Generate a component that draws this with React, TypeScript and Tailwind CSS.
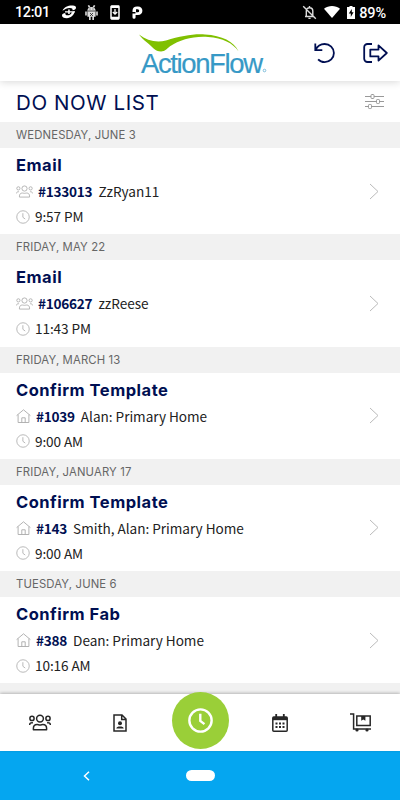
import type { ReactNode } from 'react';

const items = [
  { date: 'WEDNESDAY, JUNE 3', title: 'Email', type: 'lead', id: '#133013', name: 'ZzRyan11', time: '9:57 PM' },
  { date: 'FRIDAY, MAY 22', title: 'Email', type: 'lead', id: '#106627', name: 'zzReese', time: '11:43 PM' },
  { date: 'FRIDAY, MARCH 13', title: 'Confirm Template', type: 'job', id: '#1039', name: 'Alan: Primary Home', time: '9:00 AM' },
  { date: 'FRIDAY, JANUARY 17', title: 'Confirm Template', type: 'job', id: '#143', name: 'Smith, Alan: Primary Home', time: '9:00 AM' },
  { date: 'TUESDAY, JUNE 6', title: 'Confirm Fab', type: 'job', id: '#388', name: 'Dean: Primary Home', time: '10:16 AM' },
];

function PeopleIcon({ className, stroke }: { className: string; stroke: number }) {
  return (
    <svg className={className} viewBox="0 0 22 17" fill="none" stroke="currentColor" strokeWidth={stroke}>
      <circle cx="11" cy="4.6" r="3.4" />
      <circle cx="3" cy="4.4" r="2.1" />
      <circle cx="19" cy="4.4" r="2.1" />
      <path d="M4.4 15.8v-1.5c0-2.3 1.5-3.8 3.7-3.8.9 0 1.7.4 2.9.4s2-.4 2.9-.4c2.2 0 3.7 1.5 3.7 3.8v1.5H4.4z" strokeLinejoin="round" />
      <path d="M.6 11c0-1.5.9-2.2 2.3-2.2h1M21.4 11c0-1.5-.9-2.2-2.3-2.2h-1" />
    </svg>
  );
}

function ClockIcon({ className, stroke }: { className: string; stroke: number }) {
  return (
    <svg className={className} viewBox="0 0 24 24" fill="none" stroke="currentColor" strokeWidth={stroke}>
      <circle cx="12" cy="12" r="10.7" />
      <path d="M11.8 5.5v7l4 3" />
    </svg>
  );
}

function HomeIcon() {
  return (
    <svg className="h-[14px] w-[15px]" viewBox="0 0 15 14" fill="none" stroke="currentColor" strokeWidth="0.9">
      <path d="M.6 6.6 7.5.8l6.9 5.8M2.1 5.6v7.9h10.8V5.6M5.8 13.5V8.8h3.4v4.7" />
    </svg>
  );
}

function StatusBar() {
  return (
    <div className="flex h-6 shrink-0 items-center bg-black pl-[15px] pr-[14px] text-white">
      <span className="w-[46px] whitespace-nowrap pt-[2px] font-['Roboto',sans-serif] text-[14.5px] font-medium leading-6 tracking-[-0.4px]">12:01</span>
      <svg className="h-4 w-4" viewBox="0 0 16 16" fill="white">
        <path d="M1.5 6.8C3 2.8 8.500 1 12 1.600c2 .2 3 1 3 2.100 0 1.400-1.500 2.500-3.500 2.500.5-1.600-1-2.400-3-2.200-2.500.2-4.500 1.200-7 2.800z" />
        <path d="M13.800 7c-.5 4-4 7-8 7.200-3 0-5-1.100-4.800-3C1.200 9.800 2.600 9 4.300 8.900c-.2 1.500.6 2.400 2.200 2.400 2.300 0 3.700-1.300 4.200-2.900z" />
        <path d="M4 7.200h3.200V5.500h1.500v1.700h5v1.300h-5v1.600H7.200V8.500H4z" />
      </svg>
      <svg className="ml-2 h-[15px] w-[13px]" viewBox="0 0 13 15" fill="#ddd">
        <path d="M2.4 5.8C2.4 3.7 4 2 6.5 2s4.1 1.7 4.1 3.8v6H9V15H7.3v-3.2H5.7V15H4v-3.2H2.4z" />
        <path d="m3.4.3 1.2 2M9.6.3l-1.2 2M1 6.5v4M12 6.5v4" stroke="#ddd" strokeWidth="1.6" />
        <path d="M4.5 4h1M7.5 4h1M2.4 6h8.2M5 8l3 3M8 8l-3 3" stroke="#222" strokeWidth=".8" />
      </svg>
      <svg className="ml-[12px] h-[15px] w-[10px]" viewBox="0 0 10 15" fill="none" stroke="white">
        <rect x="1" y="1" width="8" height="13" rx=".7" strokeWidth="1.5" />
        <path d="M1 1.8h8M1 13h8" strokeWidth="2.3" />
        <path d="M5 4v5M2.8 7 5 9.2 7.2 7" strokeWidth="1.3" />
      </svg>
      <svg className="ml-[12px] h-[13px] w-[11px]" viewBox="0 0 11 13" fill="white" fillRule="evenodd">
        <path d="M.5 6V4.800C.5 2 2.200.5 5 .5h1c2.700 0 4.400 1.700 4.400 4.200S8.700 9 6 9H3.600v2.200a1.500 1.500 0 0 1-3.100 0V7.500h3V6zM4 3.300v3h1.700a1.500 1.500 0 0 0 0-3z" />
      </svg>
      <svg className="ml-auto h-[15px] w-[15px]" viewBox="0 0 15 15" fill="none" stroke="#ddd" strokeWidth="1.4">
        <path d="M3 11.5h9M4.3 11V6c0-2 1.3-3.2 3.2-3.2s3.3 1.2 3.3 3.2v5M7.5 1v2M6.4 13.4h2.2M1.2 1.2l12.6 12.6" />
      </svg>
      <svg className="ml-[7px] h-3 w-4" viewBox="0 0 16 12" fill="white">
        <path d="M0 2.8C4.5-.9 11.5-.9 16 2.8L8 12z" />
      </svg>
      <svg className="ml-[7px] h-[13px] w-2" viewBox="0 0 8 13">
        <path d="M2.5 0h3v1H8v12H0V1h2.5z" fill="white" />
        <path d="M4.8 3 1.8 7.5h2V11l2.8-4.8H4.8z" fill="black" />
      </svg>
      <span className="ml-[4px] pt-[3px] font-['Roboto',sans-serif] text-[14.5px] font-medium leading-6 tracking-[-0.1px]">89%</span>
    </div>
  );
}

function Header() {
  return (
    <header className="z-10 flex h-[57px] shrink-0 items-center bg-white pl-[139px] pr-[12px] text-[#000f52] shadow-[0_1px_8px_rgba(0,0,0,0.16)]">
      <svg className="h-[42px] w-[130px] overflow-visible" viewBox="0 0 130 42">
        <path d="M0 2.5C8 8.5 17 11 27 8.5 42 4 54 1.6 66 2.4c17 1 29 7 33.500 16.800-6-8.500-15.500-13.200-30.500-14.300-15-1-28 2.800-38 9.300-3 2.500-5 5.200-9 5.200-6 0-9-5-14-9C4.500 7.800 2 5 0 2.5z" fill="#80c000" />
        <text x="2" y="40.500" textLength="122" lengthAdjust="spacing" fontSize="27.500" fill="#3799c6" stroke="#3799c6" strokeWidth=".2" fontFamily="Liberation Sans, sans-serif">ActionFlow</text>
        <circle cx="125.500" cy="38.500" r="1.300" fill="none" stroke="#3799c6" strokeWidth=".6" />
      </svg>
      <svg className="ml-auto h-[22px] w-[22px]" viewBox="0 0 22 22" fill="none" stroke="currentColor" strokeWidth="1.8">
        <path d="M1.3 1.4v6.8h7M1.6 8C3.3 4.2 6.5 2 10.6 2c5.2 0 9.3 4 9.3 9s-4 9.2-9.2 9.2c-2.7 0-5-1-6.6-2.8" />
      </svg>
      <svg className="ml-[27px] h-5 w-[25px]" viewBox="0 0 25 20" fill="none" stroke="currentColor" strokeWidth="1.8" strokeLinejoin="round">
        <path d="M9 1H4.5A3.3 3.3 0 0 0 1.2 4.3v11.4A3.3 3.3 0 0 0 4.5 19H9" />
        <path d="M7.3 6.6h8.2V2.3L23.8 10l-8.3 7.6v-4.2H7.3z" />
      </svg>
    </header>
  );
}

function ListItem({ item }: { item: (typeof items)[number] }) {
  return (
    <section className="h-[112.3px] shrink-0 bg-white">
      <h2 className="h-[26px] bg-[#f1f1f1] pl-4 font-['Inter',sans-serif] text-[11.3px] leading-[26.5px] tracking-[0.15px] text-[#666]">{item.date}</h2>
      <div className="flex h-[86px] items-center justify-between pl-4 pr-[21px] text-[#222]">
        <div className="h-full">
          <h3 className="pt-[5px] font-['Inter',sans-serif] text-[16.5px] font-bold leading-6 tracking-[0.5px] text-[#000f52]">{item.title}</h3>
          <div className="mt-px flex h-[26px] items-center font-['Noto_Sans_CJK_SC',sans-serif] text-[13.6px] leading-[26px]">
            <span className="text-[#aaa]">
              {item.type === 'lead' ? <PeopleIcon className="h-[13px] w-[17px]" stroke={1.1} /> : <HomeIcon />}
            </span>
            <b className="ml-[5px] font-bold tracking-[-0.25px] text-[#000f52]">{item.id}</b>
            <span className="ml-[6px] tracking-[-0.03px]">{item.name}</span>
          </div>
          <div className="flex h-[25px] items-center font-['Noto_Sans_CJK_SC',sans-serif] text-[13.6px] leading-[25px]">
            <ClockIcon className="h-[14px] w-[14px] text-[#aaa]" stroke={1.4} />
            <span className="ml-[5px] tracking-[-0.1px]">{item.time}</span>
          </div>
        </div>
        <svg className="h-[17px] w-[10px]" viewBox="0 0 10 17" fill="none" stroke="#bbb" strokeWidth="1">
          <path d="m1 1 8 7.5L1 16" />
        </svg>
      </div>
    </section>
  );
}

function Tab({ children }: { children: ReactNode }) {
  return <div className="flex w-20 items-center justify-center">{children}</div>;
}

function TabBar() {
  return (
    <nav className="z-10 flex h-[57px] shrink-0 bg-white text-[#272727] shadow-[0_-1px_3px_rgba(0,0,0,0.25)]">
      <Tab><PeopleIcon className="h-[17px] w-[22px]" stroke={1.5} /></Tab>
      <Tab>
        <svg className="h-[18px] w-[14px]" viewBox="0 0 14 18" fill="none" stroke="currentColor" strokeWidth="1.5">
          <path d="M1 1h8l4 4v12H1zM8.7 1v4.4H13" />
          <circle cx="7" cy="9.3" r="2" fill="currentColor" stroke="none" />
          <path d="M3.3 14.5c.3-1.7 1.4-2.1 3.7-2.1s3.4.4 3.7 2.1z" fill="currentColor" stroke="none" />
        </svg>
      </Tab>
      <Tab>
        <div className="-mt-[5px] flex h-[57px] w-[57px] shrink-0 items-center justify-center rounded-full bg-[#9acf38] text-white">
          <ClockIcon className="h-[25px] w-[25px]" stroke={2.3} />
        </div>
      </Tab>
      <Tab>
        <svg className="h-[18px] w-4" viewBox="0 0 16 18" fill="none" stroke="currentColor" strokeWidth="1.5">
          <rect x=".8" y="3" width="14.4" height="14.2" rx="1" />
          <path d="M1 4.6h14" strokeWidth="3.2" />
          <path d="M4.2 0v3M11.8 0v3" strokeWidth="1.8" />
          <path d="M3.5 9.5h9M3.5 13h9" strokeWidth="2" strokeDasharray="2 1.5" />
        </svg>
      </Tab>
      <Tab>
        <svg className="h-[19px] w-[21px]" viewBox="0 0 21 19" fill="none" stroke="currentColor" strokeWidth="1.5">
          <path d="M0 1h3.6v15H21M6.8 3h13.4v9.5H6.8z" />
          <path d="M11.2 3h4.2v4.8l-2.1-1.4-2.1 1.4z" fill="currentColor" stroke="none" />
          <circle cx="7" cy="17" r="1.6" fill="currentColor" stroke="none" />
          <circle cx="17" cy="17" r="1.6" fill="currentColor" stroke="none" />
        </svg>
      </Tab>
    </nav>
  );
}

export default function App() {
  return (
    <div className="flex h-[800px] w-[400px] flex-col overflow-hidden bg-white">
      <StatusBar />
      <Header />
      <main className="flex min-h-0 flex-1 flex-col overflow-hidden">
        <div className="flex h-[41px] shrink-0 items-center justify-between pl-4 pr-4">
          <h1 className="pt-[2px] font-['Inter',sans-serif] text-[20.5px] leading-[41px] tracking-[0.6px] text-[#000f52]">DO NOW LIST</h1>
          <svg className="h-4 w-[19px]" viewBox="0 0 19 16" fill="white" stroke="#999" strokeWidth="1">
            <path d="M0 2.5h19M0 7.5h19M0 12.5h19" />
            <rect x="6" y=".5" width="3" height="4" rx=".8" />
            <rect x="11.5" y="5.5" width="3" height="4" rx=".8" />
            <rect x="3.5" y="10.5" width="3" height="4" rx=".8" />
          </svg>
        </div>
        {items.map((item) => (
          <ListItem key={item.date} item={item} />
        ))}
        <div className="h-[26px] shrink-0 bg-[#f1f1f1]" />
      </main>
      <TabBar />
      <div className="flex h-[49px] shrink-0 items-center bg-[#05a6f0] pl-[83px]">
        <svg className="h-[10px] w-[7px]" viewBox="0 0 7 10" fill="none" stroke="white" strokeWidth="1.5">
          <path d="M6 .7 1.5 5 6 9.3" />
        </svg>
        <div className="ml-[96px] h-[11px] w-[29px] rounded-full bg-white" />
      </div>
    </div>
  );
}
